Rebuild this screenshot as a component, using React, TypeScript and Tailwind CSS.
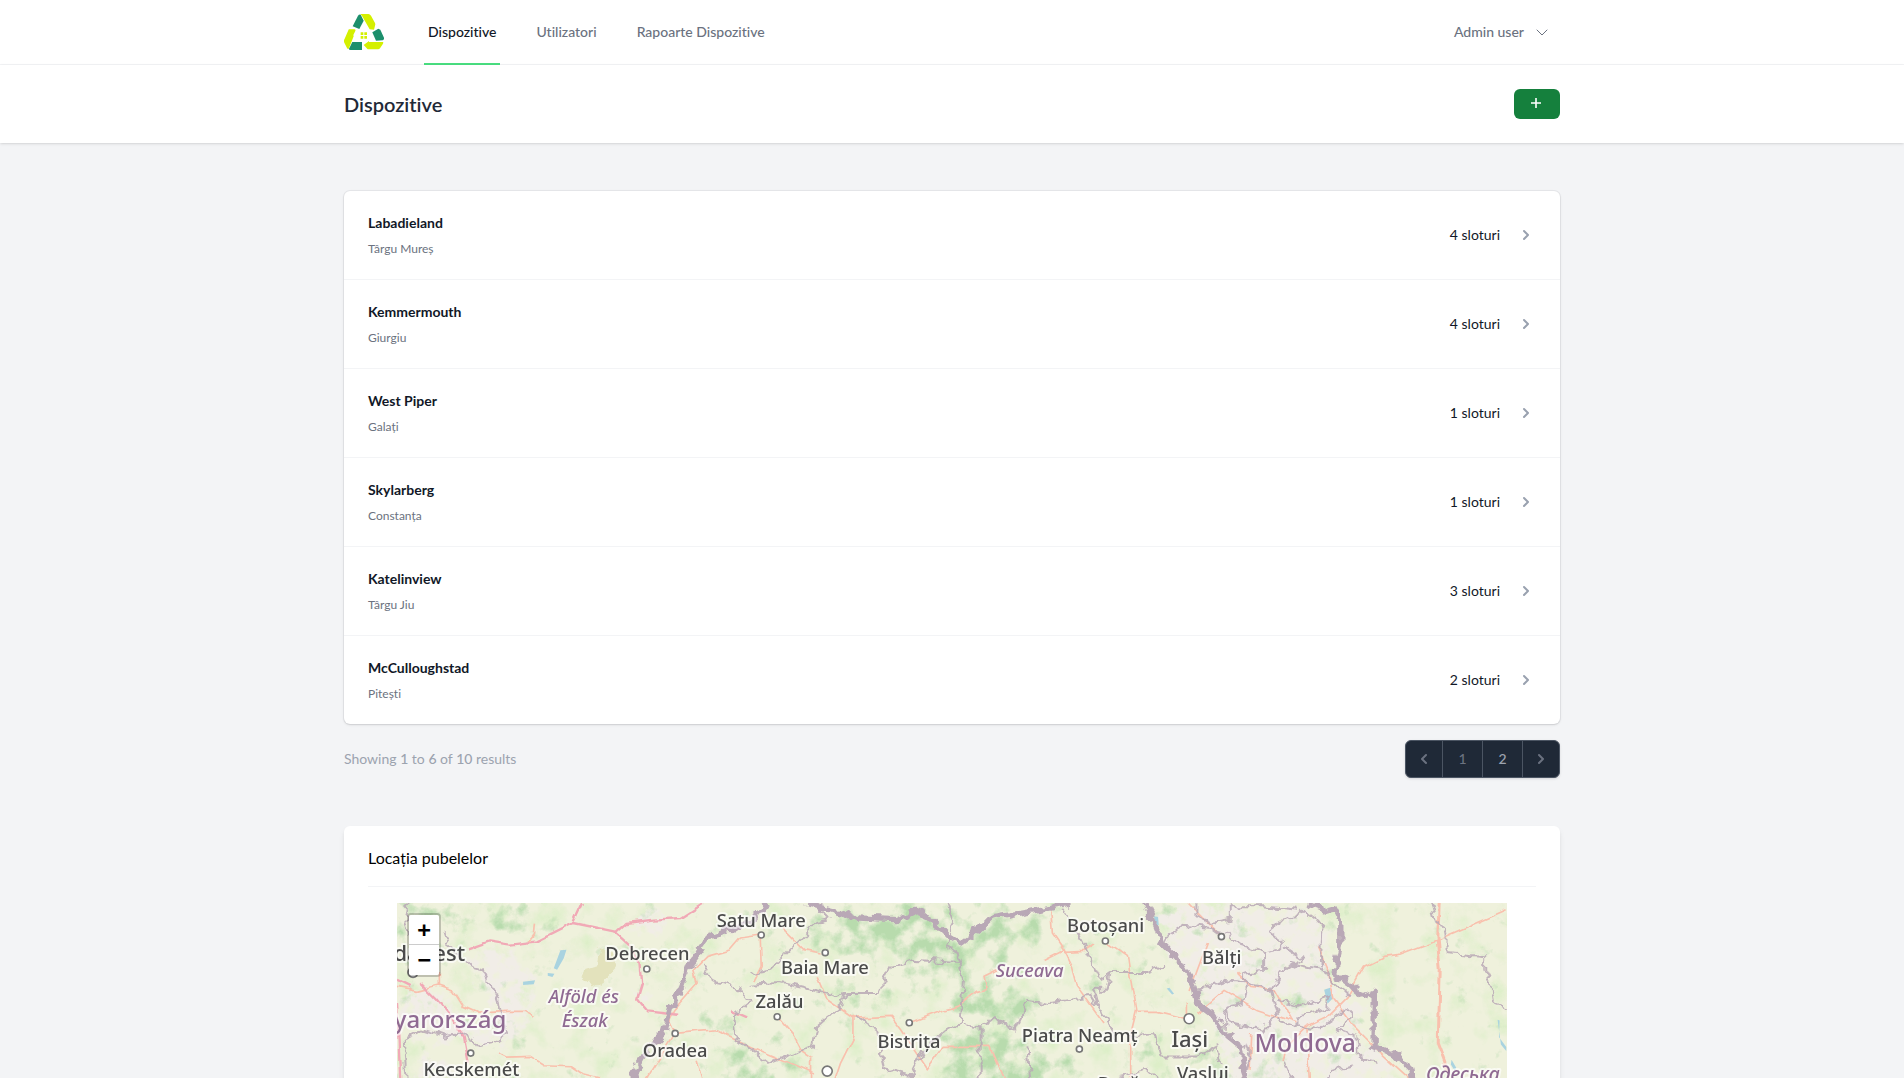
import type { ReactNode } from "react";

type Device = { name: string; city: string; slots: number };

const devices: Device[] = [
  { name: "Labadieland", city: "Târgu Mureș", slots: 4 },
  { name: "Kemmermouth", city: "Giurgiu", slots: 4 },
  { name: "West Piper", city: "Galați", slots: 1 },
  { name: "Skylarberg", city: "Constanța", slots: 1 },
  { name: "Katelinview", city: "Târgu Jiu", slots: 3 },
  { name: "McCulloughstad", city: "Pitești", slots: 2 },
];

const navLinks = [
  { label: "Dispozitive", active: true },
  { label: "Utilizatori", active: false },
  { label: "Rapoarte Dispozitive", active: false },
];

function Container({ children }: { children: ReactNode }) {
  return <div className="mx-auto max-w-7xl px-8">{children}</div>;
}

function Logo() {
  return (
    <svg viewBox="0 0 120 108" className="h-9 w-10" role="img" aria-label="Logo">
      <g fill="#d4f000">
        <path d="M49 0h24q5 0 8 5l12 22q2 4 0 8l-3 12-13-1L58 13q-3-7-9-13Z" />
        <path d="M15 46h16q5 0 3 5l-6 12 1 4-14 36q-3 5-6-1L1 86q-3-6 1-12L13 49q1-3 2-3Z" />
        <path d="m59 93 16-12v3h42q2 2 0 5l-9 14q-2 3-6 3H71Z" />
        <path d="M50 55h8v8h-8zM61 55h8v8h-8zM50 66h8v8h-8zM61 66h8v8h-8z" />
      </g>
      <g fill="#1c8f6c">
        <path d="M42 5q3-4 8-3l9 18-13 25-20-8Z" />
        <path d="m85 55 18-11 6 3 11 24q1 6-4 8l-20 1Z" />
        <path d="M25 84h29v24H20q-6 0-5-4Z" />
      </g>
    </svg>
  );
}

function ChevronLeft() {
  return (
    <svg viewBox="0 0 20 20" fill="currentColor" className="size-5" aria-hidden="true">
      <path d="M12.707 5.293a1 1 0 010 1.414L9.414 10l3.293 3.293a1 1 0 01-1.414 1.414l-4-4a1 1 0 010-1.414l4-4a1 1 0 011.414 0z" />
    </svg>
  );
}

function ChevronRight() {
  return (
    <svg viewBox="0 0 20 20" fill="currentColor" className="size-5 flex-none" aria-hidden="true">
      <path d="M7.293 14.707a1 1 0 010-1.414L10.586 10 7.293 6.707a1 1 0 011.414-1.414l4 4a1 1 0 010 1.414l-4 4a1 1 0 01-1.414 0z" />
    </svg>
  );
}

function NavBar() {
  return (
    <nav className="border-b border-gray-100 bg-white">
      <Container>
        <div className="flex h-16 justify-between">
          <div className="flex">
            <a href="#" className="flex items-center">
              <Logo />
            </a>
            <div className="-my-px ml-10 flex gap-8">
              {navLinks.map((l) => (
                <a
                  key={l.label}
                  href="#"
                  aria-current={l.active ? "page" : undefined}
                  className={
                    l.active
                      ? "flex items-center border-b-2 border-[#4ade80] px-1 pt-0.5 text-sm leading-5 font-medium text-[#111827]"
                      : "flex items-center border-b-2 border-transparent px-1 pt-0.5 text-sm leading-5 font-medium text-[#6b7280]"
                  }
                >
                  {l.label}
                </a>
              ))}
            </div>
          </div>
          <div className="flex items-center">
            <button type="button" className="flex items-center gap-3 rounded-md p-2 pr-3 text-sm leading-4 font-medium text-[#6b7280]">
              Admin user
              <svg viewBox="0 0 12 12" className="size-3" fill="none" stroke="currentColor" strokeLinecap="round" strokeLinejoin="round" aria-hidden="true">
                <path d="m1 4 5 5 5-5" />
              </svg>
            </button>
          </div>
        </div>
      </Container>
    </nav>
  );
}

function PageHeader() {
  return (
    <header className="relative bg-white shadow">
      <Container>
        <div className="flex items-center justify-between pt-6 pb-6">
          <h1 className="text-xl leading-6 font-semibold text-[#1f2937]">Dispozitive</h1>
          <button type="button" aria-label="Adaugă dispozitiv" className="rounded-md bg-[#15803d] px-4 py-2 text-white">
            <svg viewBox="0 0 14 14" className="size-3.5" stroke="currentColor" strokeWidth="1.6" aria-hidden="true">
              <path d="M1 6h10M6 1v10" />
            </svg>
          </button>
        </div>
      </Container>
    </header>
  );
}

function DeviceList() {
  return (
    <ul className="divide-y divide-[#f3f4f6] overflow-hidden rounded-md bg-white shadow-sm ring-1 ring-gray-900/5">
      {devices.map((d) => (
        <li key={d.name}>
          <a href="#" className="flex items-center justify-between gap-6 px-6 py-5">
            <div>
              <p className="text-sm leading-6 font-bold text-[#111827]">{d.name}</p>
              <p className="mt-1 text-xs leading-5 text-[#6b7280]">{d.city}</p>
            </div>
            <div className="flex items-center gap-4 text-gray-400">
              <p className="text-sm leading-6 text-[#111827]">{d.slots} sloturi</p>
              <ChevronRight />
            </div>
          </a>
        </li>
      ))}
    </ul>
  );
}

function Pagination() {
  return (
    <div className="mt-4 flex items-center justify-between">
      <p className="text-sm leading-5 text-[#9ca3af]">
        Showing <span className="font-medium">1</span> to <span className="font-medium">6</span> of{" "}
        <span className="font-medium">10</span> results
      </p>
      <nav
        aria-label="Pagination"
        className="flex divide-x divide-[#4b5563] rounded-md border border-[#4b5563] bg-[#1f2937] text-sm leading-5 font-medium text-[#6b7280] shadow-sm"
      >
        <button type="button" disabled aria-label="Previous" className="p-2">
          <ChevronLeft />
        </button>
        <span aria-current="page" className="w-10 py-2 text-center">
          1
        </span>
        <a href="#" className="w-10 py-2 text-center text-[#9ca3af]">
          2
        </a>
        <a href="#" aria-label="Next" className="p-2">
          <ChevronRight />
        </a>
      </nav>
    </div>
  );
}

type Place = { name: string; x: number; y: number; size?: number; kind?: "region" | "country" | "city"; end?: boolean };

const places: Place[] = [
  { name: "Budapest", x: 204, y: 173, size: 66, kind: "city", end: true },
  { name: "Magyarország", x: 328, y: 375, size: 72, kind: "country", end: true },
  { name: "Debrecen", x: 751, y: 172 },
  { name: "Oradea", x: 834, y: 461 },
  { name: "Kecskemét", x: 223, y: 520 },
  { name: "Alföld és", x: 560, y: 299, kind: "region" },
  { name: "Észak", x: 563, y: 371, kind: "region" },
  { name: "Satu Mare", x: 1092, y: 71 },
  { name: "Zalău", x: 1147, y: 314 },
  { name: "Baia Mare", x: 1283, y: 213 },
  { name: "Bistrița", x: 1535, y: 435 },
  { name: "Suceava", x: 1897, y: 221, kind: "region" },
  { name: "Botoșani", x: 2125, y: 87 },
  { name: "Piatra Neamț", x: 2047, y: 416 },
  { name: "Bacău", x: 2181, y: 560 },
  { name: "Bălți", x: 2473, y: 183 },
  { name: "Iași", x: 2377, y: 431, size: 66, kind: "city" },
  { name: "Moldova", x: 2723, y: 447, size: 74, kind: "country" },
  { name: "Vaslui", x: 2416, y: 530 },
  { name: "Одеська", x: 3196, y: 533, size: 58, kind: "region" },
];

const towns: [number, number, number][] = [
  [48, 208, 15],
  [749, 198, 9],
  [834, 391, 9],
  [221, 450, 9],
  [1092, 96, 9],
  [1140, 341, 9],
  [1284, 149, 9],
  [1536, 359, 9],
  [1290, 504, 15],
  [2124, 114, 9],
  [2046, 438, 9],
  [2472, 101, 9],
  [2375, 347, 15],
];

function RegionMap() {
  return (
    <svg viewBox="0 0 3327 1200" className="block w-full bg-[#eff1dc]" role="img" aria-label="Harta pubelelor">
      <defs>
        <filter id="forest" filterUnits="userSpaceOnUse" x="0" y="0" width="3327" height="1200" colorInterpolationFilters="sRGB">
          <feGaussianBlur in="SourceGraphic" stdDeviation="26" result="soft" />
          <feTurbulence type="fractalNoise" baseFrequency="0.018" numOctaves="5" seed="7" result="noise" />
          <feComposite in="soft" in2="noise" operator="arithmetic" k1="0" k2="0.36" k3="0.9" k4="-0.62" />
          <feColorMatrix values="0 0 0 0 0.72  0 0 0 0 0.86  0 0 0 0 0.68  0 0 0 3.6 0" />
        </filter>
        <filter id="meadow" filterUnits="userSpaceOnUse" x="0" y="0" width="3327" height="1200" colorInterpolationFilters="sRGB">
          <feTurbulence type="fractalNoise" baseFrequency="0.012" numOctaves="5" seed="21" />
          <feColorMatrix values="0 0 0 0 0.85  0 0 0 0 0.935  0 0 0 0 0.77  0 0 0 3 -1.55" />
        </filter>
        <filter id="urban" filterUnits="userSpaceOnUse" x="0" y="0" width="3327" height="1200" colorInterpolationFilters="sRGB">
          <feGaussianBlur in="SourceGraphic" stdDeviation="22" result="soft" />
          <feTurbulence type="fractalNoise" baseFrequency="0.03" numOctaves="4" seed="3" result="noise" />
          <feComposite in="soft" in2="noise" operator="arithmetic" k1="0" k2="0.5" k3="0.8" k4="-0.7" />
          <feColorMatrix values="0 0 0 0 0.945  0 0 0 0 0.93  0 0 0 0 0.905  0 0 0 5 0" />
        </filter>
        <filter id="rough" filterUnits="userSpaceOnUse" x="-60" y="-60" width="3450" height="1300" colorInterpolationFilters="sRGB">
          <feTurbulence type="fractalNoise" baseFrequency="0.035" numOctaves="2" seed="5" />
          <feDisplacementMap in="SourceGraphic" scale="34" xChannelSelector="R" yChannelSelector="G" />
        </filter>
        <filter id="wavy" filterUnits="userSpaceOnUse" x="-60" y="-60" width="3450" height="1300" colorInterpolationFilters="sRGB">
          <feTurbulence type="fractalNoise" baseFrequency="0.02" numOctaves="2" seed="9" />
          <feDisplacementMap in="SourceGraphic" scale="20" xChannelSelector="R" yChannelSelector="G" />
        </filter>
      </defs>

      <rect width="3327" height="1200" filter="url(#meadow)" opacity="0.8" />

      <g filter="url(#urban)">
        <path d="M200 150 330 120 420 220 410 330 330 370 230 240ZM0 250 120 240 200 330 330 340 420 360 330 440 100 420 0 400ZM660 40 800 10 850 80 720 110ZM640 260 800 250 740 300Z" />
        <path d="M2260 0H2700L2800 60 2810 240 2900 300 2900 400 3000 470 3020 560V900H2560L2500 540 2440 380 2380 260 2290 130Z" />
        <path d="M60 450 200 480 160 560 40 540ZM1000 20 1090 0 1080 40Z" />
      </g>

      <g filter="url(#forest)">
        <path d="M0 0H500L450 60 330 70 250 60 180 90 70 50 30 140 0 130Z" opacity=".75" />
        <path d="M240 20H350L340 70 250 60Z" />
        <path d="M0 290 60 260 90 330 20 340ZM200 400 320 350 330 400 240 440ZM720 180 800 170 810 240 730 260Z" opacity=".5" />
        <path d="M1260 20 1400 0H2080L1960 60 1880 110 1850 220 1900 330 1800 380 1900 420 2040 470 2070 560V1000H1560L1600 520 1640 420 1700 380 1640 250 1500 150 1400 160 1280 130 1200 110Z" opacity=".6" />
        <path d="M1300 20H1600L1650 90 1560 140 1400 120 1240 110ZM1750 90 1900 60 1930 130 1800 140ZM1740 240 1900 270 1930 330 1820 400 1720 340ZM1640 400 1800 420 1900 470 2010 520 2000 700H1680L1620 470ZM1460 60 1640 120 1690 200 1560 190Z" opacity=".8" />
        <path d="M1400 200 1640 200 1660 330 1440 320Z" opacity=".45" />
        <path d="M930 330 1000 320 1040 420 1130 470 1230 460 1240 540 1000 540 960 440 920 380ZM1290 270 1390 220 1440 300 1330 320Z" opacity=".75" />
        <path d="M2110 150 2170 170 2160 230 2100 220ZM2200 400 2260 380 2280 480 2220 500ZM2400 400 2480 420 2500 500 2400 500ZM2660 270 2740 270 2740 300 2660 300ZM2560 350 2650 370 2680 400 2580 400ZM2600 470 2650 480 2640 560 2590 540ZM2480 270 2520 280 2520 320 2470 310ZM2640 70 2680 80 2670 110 2640 100Z" opacity=".85" />
      </g>

      <g fill="#e0dfb4" filter="url(#rough)" opacity=".8">
        <path d="M610 130 640 150 660 190 620 230 590 250 550 220 570 190 600 180Z" />
      </g>
      <g fill="#a9d3e0">
        <path d="m490 142 18-2-8 26-20 34-10-4ZM378 236l36-4-4 12-32 2ZM452 210l20 2-6 10-14-4ZM2780 260l18-6 6 34-14 14ZM2308 256l8-2 14 18-6 2ZM2270 40l12 2 2 24-12 10ZM3300 350l6 2-2 50 22 30v12l-16-20ZM3162 470l14 24-4 10-12-20Z" />
      </g>

      <g fill="none" strokeLinejoin="round" filter="url(#wavy)">
        <g stroke="#f9c0ad" strokeWidth="5">
          <path d="M415 62 412 95 396 115M0 250 60 262 124 246 170 262 200 310 245 330 330 325 385 325 410 340M124 205V246M306 450 330 462 400 460 440 485 520 488 560 515 620 530" />
          <path d="M1092 96 1030 105 1000 140 930 160 890 200 900 240 830 320 815 350 834 391 900 385 960 380 1060 430 1180 480 1250 510M1092 96 1095 190 1070 240M1160 80 1220 140 1270 150M834 391 740 540M900 470 920 540" />
          <path d="M1140 341 1190 400 1210 440 1240 460 1240 530M1260 220 1290 290 1370 345 1480 340 1510 380 1590 500 1640 430 1780 430 1820 520 1850 600M1370 345 1370 400 1330 480 1310 540M1536 359 1640 320 1680 310 1740 265 1770 260 1760 220 1800 200" />
          <path d="M1960 20 1965 90 2000 140 1940 170M2000 140 2024 190 2040 250 2120 360M2000 148 2060 145 2090 125M2124 114 2190 160 2200 230 2215 320 2200 380 2200 560M2215 325 2280 325 2370 347 2370 300" />
          <path d="M2372 0 2440 70 2472 101M2430 120 2400 200 2375 270M2400 330 2480 262 2580 320 2700 360M2520 210 2560 250 2630 260 2680 350M2728 370 2790 340 2850 280 2900 190 2960 160 3000 155 3120 110 3327 20M2760 130 2790 200 2810 290 2870 370 2940 440 3040 530M2728 370 2670 430 2660 480M2728 370 2740 550M2560 390 2555 500" />
        </g>
        <path d="M3122 0 3118 100 3128 200 3122 420 3145 480 3160 560" stroke="#f9c0ad" strokeWidth="9" />
        <g stroke="#f1a9b6" strokeWidth="7">
          <path d="M210 140 280 115 340 125 420 115 530 60 650 85 700 130 730 180 735 240 720 290 750 325 840 335M530 55 555 0M655 92 690 60 770 50 850 45 920 0M70 240 120 290 170 350 200 400 215 480M0 230 40 250M0 300 10 540M1005 320 1050 340" />
        </g>
      </g>

      <g fill="none" stroke="#b9a8b6" strokeLinejoin="round" filter="url(#rough)">
        <g strokeWidth="6" opacity=".85">
          <path d="M35 0 25 60 40 100M145 85 160 130 220 190 260 200 300 280 310 340 330 390 290 420 240 430 215 390 140 400 80 380 20 410 30 540" />
          <path d="M915 180 950 235 1020 250 1060 300 1010 340 1020 410 1110 480 1160 460 1250 430 1260 370 1330 310 1350 270 1440 270 1480 190 1550 170 1680 180 1700 230 1690 360" />
          <path d="M1060 245 1150 240 1240 260 1340 280M1060 210 1120 200 1200 120 1260 60 1300 50 1270 20M1380 340 1440 380 1460 500 1540 520 1580 440 1650 380 1690 362 1750 370 1790 345 1850 380 1890 290 1960 300 2080 280 2120 340 2160 410M1750 370 1750 540" />
          <path d="M1650 0 1670 60 1650 130 1690 160 1680 180M1995 20 2040 90 2110 230 2140 210 2250 210 2300 190M2140 210 2130 260 2090 260 2100 300M1890 430 1900 540M2180 400 2270 390 2290 460 2400 460 2460 430 2470 480M2160 520 2250 500 2290 540" />
          <path d="M2300 130 2320 90 2360 65 2440 75 2460 90 2490 95 2540 130 2600 150 2640 140 2660 120 2610 80 2650 50 2700 40 2720 20 2760 50 2775 70 2770 180 2800 230 2860 280" />
          <path d="M2400 0 2400 40 2440 60 2500 50 2500 0M2500 10 2600 10 2700 20M2600 150 2600 200 2540 210 2540 240 2620 260 2650 210 2680 190 2720 170 2660 130M2680 180 2780 200M2400 260 2480 230 2550 240 2540 300 2490 310 2500 360 2600 380 2640 330 2620 260M2640 290 2700 310 2790 280 2790 320 2700 340 2700 370 2640 350M2490 310 2480 390 2560 440 2540 540M2700 370 2760 380 2850 320 2870 340 2820 380 2880 400 2890 470 2940 480M2660 470 2690 540M2780 540 2800 500 2870 490" />
          <path d="M3100 0 3120 70 3150 90 3150 150 3260 160 3260 200 3280 240 3290 300 3327 315" />
        </g>
        <g strokeWidth="16">
          <path d="M1105 0 1060 60 980 85 940 100 880 180 850 260 820 320 800 390 750 440 710 510 715 570" />
          <path d="M1230 0 1300 20 1380 45 1500 50 1550 25 1600 45 1650 95 1690 120 1740 85 1780 45 1900 25 2020 0" />
          <path d="M2245 0 2275 70 2295 120 2350 180 2390 250 2400 300 2440 330 2480 390 2530 430 2540 500 2560 560" />
          <path d="M2730 0 2790 25 2810 20 2830 60 2830 130 2810 210 2850 240 2900 280 2930 265 2930 360 2930 430 3000 460 3040 500 3050 560" />
        </g>
      </g>

      <g fill="#fff" stroke="#777" strokeWidth="5">
        {towns.map(([x, y, r]) => (
          <circle key={x} cx={x} cy={y} r={r} />
        ))}
      </g>
      <g stroke="#fff" strokeOpacity=".65" strokeWidth="12" strokeLinejoin="round" paintOrder="stroke">
        {places.map((p) => (
          <text
            key={p.name}
            x={p.x}
            y={p.y}
            fontSize={p.size ?? 55}
            fontWeight={500}
            textAnchor={p.end ? "end" : "middle"}
            fontStyle={p.kind === "region" ? "italic" : "normal"}
            fill={p.kind === "region" || p.kind === "country" ? "#8f6a92" : "#4a4a4a"}
            fontFamily='"Noto Sans", sans-serif'
          >
            {p.name}
          </text>
        ))}
      </g>
    </svg>
  );
}

function MapCard() {
  return (
    <section className="mt-12 overflow-hidden rounded-md bg-white px-6 py-5 shadow-md">
      <h2 className="border-b border-gray-100 pb-4 text-base leading-6 text-black">Locația pubelelor</h2>
      <div className="relative mx-auto mt-4 w-[95%]">
        <RegionMap />
        <div className="absolute top-2.5 left-2.5 flex flex-col overflow-hidden rounded border-2 border-black/20 bg-clip-padding font-['DejaVu_Sans_Mono',monospace] text-[22px] leading-[30px] font-bold text-black">
          <button type="button" aria-label="Zoom in" className="size-[30px] border-b border-[#ccc] bg-white leading-[30px]">
            +
          </button>
          <button type="button" aria-label="Zoom out" className="size-[30px] bg-white leading-[30px]">
            −
          </button>
        </div>
      </div>
    </section>
  );
}

export default function App() {
  return (
    <div className="min-h-screen bg-[#f3f4f6] font-[Lato,sans-serif] [font-variant-ligatures:none]">
      <NavBar />
      <PageHeader />
      <main className="py-12">
        <Container>
          <DeviceList />
          <Pagination />
          <MapCard />
        </Container>
      </main>
    </div>
  );
}
